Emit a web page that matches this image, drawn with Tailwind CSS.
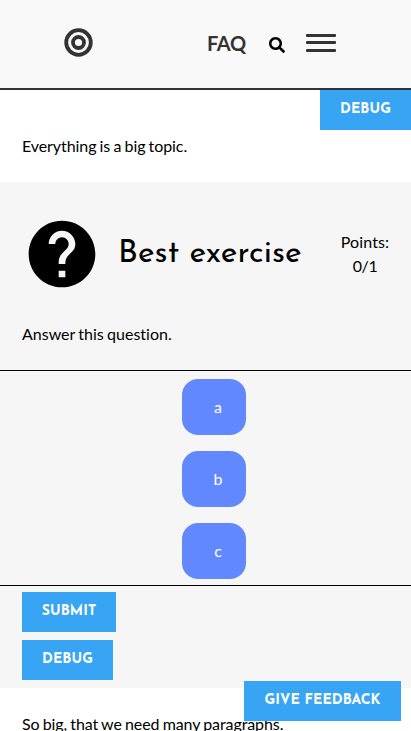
<!DOCTYPE html>
<html lang="en"><head><meta charset="utf-8"><title>Best exercise</title>
<script src="https://cdn.jsdelivr.net/npm/@tailwindcss/browser@4"></script></head>
<body class="h-[731px] overflow-hidden bg-white font-['Lato',sans-serif] text-base leading-6 text-black [font-variant-ligatures:none]">
<header class="flex h-[90px] items-start border-b-2 border-[#333] bg-[#f9f9f9] pl-16 text-[#333]">
<svg class="mt-7 size-[29px]" viewBox="0 0 29 29" fill="none" stroke="#333"><circle cx="14.5" cy="14.5" r="12.3" stroke-width="3.8"/><circle cx="14.5" cy="14.5" r="5.5" stroke-width="3.8"/></svg>
<a class="mt-[27px] ml-[114px] w-[39px] text-xl leading-8 font-bold tracking-[-0.3px]">FAQ</a>
<svg class="mt-[37px] ml-[23px] size-4" viewBox="0 0 512 512"><path d="M505 442.700L405.300 343c-4.500-4.500-10.600-7-17-7H372c27.600-35.300 44-79.700 44-128C416 93.100 322.900 0 208 0S0 93.100 0 208s93.100 208 208 208c48.300 0 92.700-16.400 128-44v16.300c0 6.400 2.500 12.500 7 17l99.700 99.700c9.400 9.400 24.600 9.400 33.900 0l28.300-28.300c9.400-9.400 9.400-24.600.1-34zM208 336c-70.700 0-128-57.200-128-128 0-70.700 57.200-128 128-128 70.700 0 128 57.200 128 128 0 70.700-57.200 128-128 128z"/></svg>
<svg class="mt-[34px] ml-[21px] h-[18px] w-[30px]" viewBox="0 0 30 18" fill="#333"><rect width="30" height="3" rx="1"/><rect y="7" width="30" height="3" rx="1"/><rect y="15" width="30" height="3" rx="1"/></svg>
</header>
<div class="flex h-10 justify-end"><button class="flex h-10 w-[91px] justify-center bg-[#37a5f3] pt-2 font-['Josefin_Sans','Lato',sans-serif] text-[14px] font-bold text-white"><span class="tracking-[0.1px]">DEBUG</span></button></div>
<p class="h-[52px] px-[22px] pt-1 tracking-[-0.08px] [word-spacing:-0.8px]">Everything is a big topic.</p>
<main class="h-[506px] bg-[#f6f6f6]">
<div class="flex h-[140px] items-start">
<svg class="mt-8 ml-[22px] size-20" viewBox="0 0 24 24"><path d="M12 2C6.480 2 2 6.480 2 12s4.480 10 10 10 10-4.480 10-10S17.520 2 12 2zm1 17h-2v-2h2v2zm2.070-7.750l-.9.920C13.450 12.900 13 13.500 13 15h-2v-.5c0-1.100.45-2.100 1.170-2.830l1.240-1.260c.37-.36.59-.86.59-1.410 0-1.100-.9-2-2-2s-2 .9-2 2H8c0-2.210 1.790-4 4-4s4 1.790 4 4c0 .88-.36 1.680-.93 2.250z"/></svg>
<h1 class="mt-[52px] ml-4 w-[190px] font-['Josefin_Sans','Lato',sans-serif] text-[32px] leading-10 whitespace-nowrap"><span class="tracking-[0.1px]">Best exercise</span></h1>
<div class="mt-12 ml-6 w-[66px] text-center"><span class="tracking-[0.12px]">Points:</span><br><span class="tracking-[-0.4px]">0/1</span></div>
</div>
<p class="h-12 px-[22px] [word-spacing:-0.8px]">Answer this question.</p>
<div class="flex h-[216px] flex-col items-center gap-4 border-y border-black pt-2 pl-[17px] text-white">
<button class="h-14 w-16 rounded-2xl bg-[#6188ff] pl-2">a</button>
<button class="h-14 w-16 rounded-2xl bg-[#6188ff] pl-2">b</button>
<button class="h-14 w-16 rounded-2xl bg-[#6188ff] pl-2">c</button>
</div>
<div class="flex flex-col items-start gap-2 pt-1.5 pl-[22px] font-['Josefin_Sans','Lato',sans-serif] text-[14px] font-bold text-white">
<button class="flex h-10 w-[94px] justify-center bg-[#37a5f3] pt-2"><span class="tracking-[0.1px]">SUBMIT</span></button>
<button class="flex h-10 w-[91px] justify-center bg-[#37a5f3] pt-2"><span class="tracking-[0.1px]">DEBUG</span></button>
</div>
</main>
<p class="px-[22px] pt-6 tracking-[-0.09px] [word-spacing:-0.8px]">So big, that we need many paragraphs.</p>
<button class="fixed right-[10px] bottom-[10px] flex h-10 w-[157px] justify-center bg-[#37a5f3] pt-2 font-['Josefin_Sans','Lato',sans-serif] text-[14px] font-bold text-white"><span class="tracking-[0.1px]">GIVE FEEDBACK</span></button>
</body></html>
